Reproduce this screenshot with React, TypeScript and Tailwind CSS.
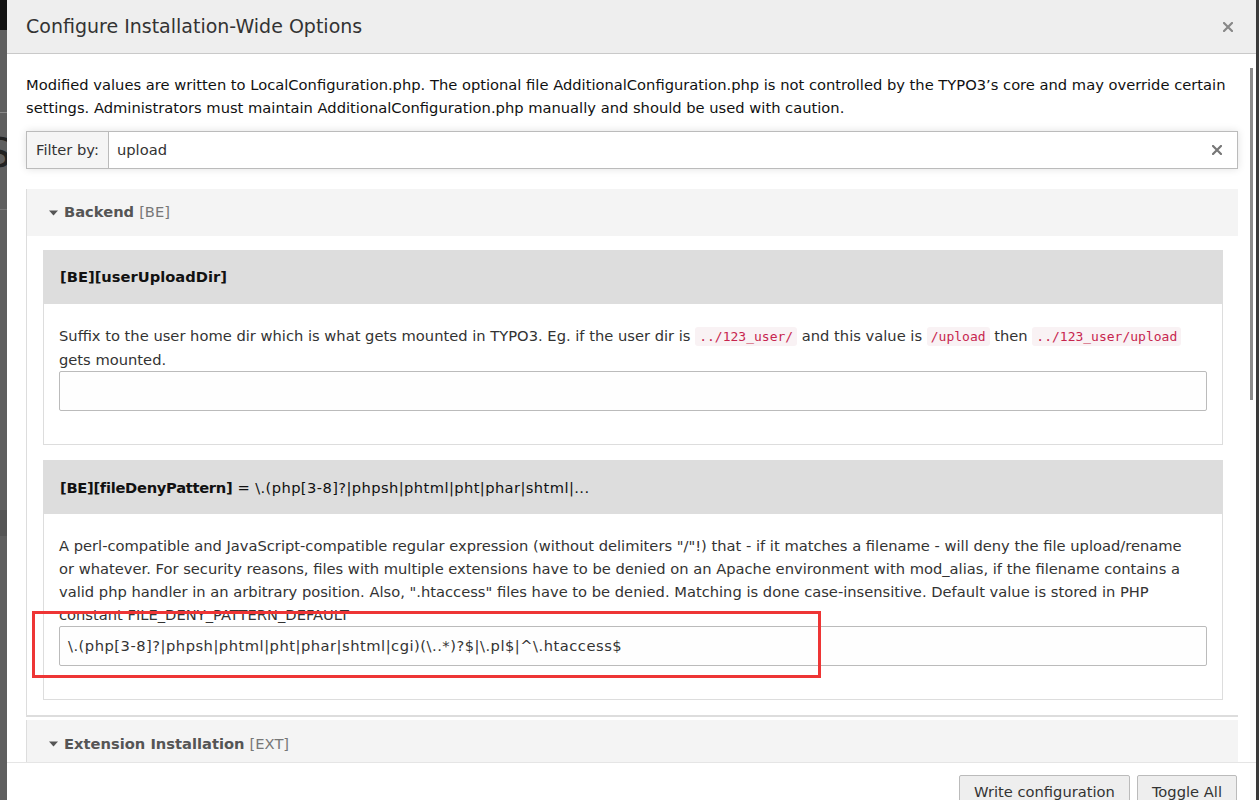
import React from "react";

const font = { fontFamily: '"DejaVu Sans", Verdana, sans-serif' };

function Code({ children }: { children: React.ReactNode }) {
	return (
		<code className="rounded-[3px] bg-[#f9f2f4] px-[4px] py-[2px] text-[13px] text-[#c7254e] [font-family:'DejaVu_Sans_Mono',monospace]">
			{children}
		</code>
	);
}

function Caret() {
	return (
		<svg width="9" height="6" viewBox="0 0 9 6" className="mr-[6px] shrink-0">
			<path d="M0 0.5 L9 0.5 L4.5 5.5 Z" fill="#555" />
		</svg>
	);
}

function ClearIcon({ size = 10, color = "#777" }: { size?: number, color?: string }) {
	return (
		<svg width={size} height={size} viewBox="0 0 10 10">
			<path d="M1 1 L9 9 M9 1 L1 9" stroke={color} strokeWidth="2.2" strokeLinecap="square" />
		</svg>
	);
}

interface CardProps {
	title: React.ReactNode,
	children: React.ReactNode,
	value: string,
}

function OptionCard({ title, children, value }: CardProps) {
	return (
		<div className="border border-[#dddddd] bg-white">
			<div className="flex h-[53px] items-center bg-[#dddddd] px-[16px] text-[14.7px] text-[#111]">{title}</div>
			<div className="px-[15px] pb-[33px] pt-[21px] text-[14.7px] leading-[22.7px] text-[#333]">
				<div className="whitespace-nowrap">{children}</div>
				<div className="flex h-[40px] items-center rounded-[2px] border border-[#bbbbbb] bg-[#fefefe] px-[8px] text-[14.7px] tracking-[0.5px] text-[#333]">
					{value}
				</div>
			</div>
		</div>
	);
}

export default function App() {
	return (
		<div className="relative h-[800px] w-[1259px] overflow-hidden bg-[#5f5f5f]" style={font}>
			{/* page behind the backdrop */}
			<div className="h-[30px] bg-[#111]" />
			<div className="mt-[82px] h-px bg-[#8a8a8a]" />
			<div className="ml-[-14px] mt-[20px] text-[40px] leading-[40px] text-[#222]">S</div>
			<div className="mt-[36px] h-px bg-[#777]" />
			<div className="mt-[300px] h-[26px] bg-[#555]" />
			<div className="absolute right-0 top-0 h-[800px] w-[3px] bg-[#3a3a3a]" />

			{/* modal */}
			<div className="absolute left-[7px] top-0 flex h-[800px] w-[1249px] flex-col bg-white">
				<div className="flex h-[54px] shrink-0 items-center justify-between border-b border-[#c9c9c9] bg-[#eeeeee] pl-[19px] pr-[23px]">
					<h4 className="text-[19px] text-[#333]">Configure Installation-Wide Options</h4>
					<ClearIcon size={10} color="#888" />
				</div>

				<div className="relative flex-1 overflow-hidden">
					<div className="px-[19px] pr-[18px] pt-[19px]">
						<p className="whitespace-nowrap text-[14.7px] leading-[23px] text-[#111]">
							Modified values are written to LocalConfiguration.php. The optional file AdditionalConfiguration.php is not controlled by the TYPO3’s core and may override certain<br />
							settings. Administrators must maintain AdditionalConfiguration.php manually and should be used with caution.
						</p>

						<div className="mt-[12px] flex h-[38px] shadow-[0_0_8px_rgba(0,0,0,0.12)]">
							<span className="flex items-center border border-[#bbbbbb] bg-[#f5f5f5] px-[9px] text-[14.7px] text-[#333]">Filter by:</span>
							<div className="flex flex-1 items-center justify-between border border-l-0 border-[#bbbbbb] bg-white pl-[8px] pr-[15px] text-[14.7px] text-[#333]">
								<span>upload</span>
								<ClearIcon size={10} />
							</div>
						</div>

						<div className="mt-[20px] border-b-2 border-l border-[#dddddd]">
							<div className="flex h-[47px] items-center bg-[#f4f4f4] pl-[22px] text-[14.7px]">
								<Caret />
								<span className="font-bold text-[#555]">Backend</span>
								<span className="ml-[5px] text-[#777]">[BE]</span>
							</div>
							<div className="flex flex-col gap-[15px] pb-[15px] pl-[16px] pr-[15px] pt-[14px]">
								<OptionCard title={<span className="font-bold">[BE][userUploadDir]</span>} value="">
									Suffix to the user home dir which is what gets mounted in TYPO3. Eg. if the user dir is <Code>../123_user/</Code> and this value is <Code>/upload</Code> then <Code>../123_user/upload</Code><br />
									gets mounted.
								</OptionCard>
								<OptionCard
									title={<><span className="font-bold tracking-[-0.3px]">[BE][fileDenyPattern]</span><span className="ml-[5px] tracking-[0.4px]">= \.(php[3-8]?|phpsh|phtml|pht|phar|shtml|...</span></>}
									value={"\\.(php[3-8]?|phpsh|phtml|pht|phar|shtml|cgi)(\\..*)?$|\\.pl$|^\\.htaccess$"}
								>
									A perl-compatible and JavaScript-compatible regular expression (without delimiters "/"!) that - if it matches a filename - will deny the file upload/rename<br />
									or whatever. For security reasons, files with multiple extensions have to be denied on an Apache environment with mod_alias, if the filename contains a<br />
									valid php handler in an arbitrary position. Also, ".htaccess" files have to be denied. Matching is done case-insensitive. Default value is stored in PHP<br />
									constant FILE_DENY_PATTERN_DEFAULT
								</OptionCard>
							</div>
						</div>

						<div className="mt-[3px] border-l border-[#dddddd]">
							<div className="flex h-[47px] items-center bg-[#f4f4f4] pl-[22px] text-[14.7px]">
								<Caret />
								<span className="font-bold text-[#555]">Extension Installation</span>
								<span className="ml-[5px] text-[#777]">[EXT]</span>
							</div>
						</div>
					</div>

					{/* scrollbar thumb */}
					<div className="absolute right-[3px] top-[14px] h-[332px] w-[3px] bg-[#8c8c8c]" />
				</div>

				<div className="flex h-[38px] shrink-0 items-start justify-end gap-[7px] border-t border-[#e5e5e5] pr-[19px] pt-[12px]">
					<button className="h-[34px] rounded-[2px] border border-[#bbbbbb] bg-[#eeeeee] px-[14px] text-[14.7px] text-[#333]">Write configuration</button>
					<button className="h-[34px] rounded-[2px] border border-[#bbbbbb] bg-[#eeeeee] px-[14px] text-[14.7px] text-[#333]">Toggle All</button>
				</div>

				{/* highlight annotation */}
				<div className="absolute left-[25px] top-[611px] h-[67px] w-[789px] border-[3px] border-[#ee3535]" />
			</div>
		</div>
	);
}
